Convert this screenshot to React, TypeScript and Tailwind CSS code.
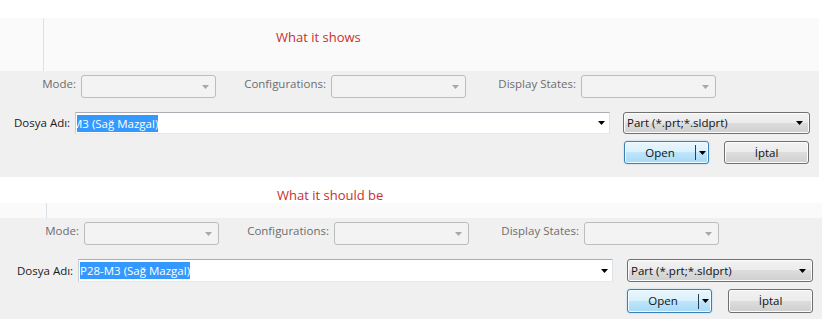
import React from "react";

function Tri({ color, w = 7, h = 4 }: { color: string; w?: number; h?: number }) {
  return (
    <svg width={w} height={h} viewBox={`0 0 ${w} ${h}`} className="block">
      <polygon points={`0,0 ${w},0 ${w / 2},${h}`} fill={color} />
    </svg>
  );
}

function DisabledCombo({ w }: { w: string }) {
  return (
    <div className={`${w} h-[23px] rounded-[3px] border border-[#bcbcbc] bg-[#f3f3f3] flex items-center justify-end pr-[6px]`}>
      <Tri color="#a8a8a8" w={7} h={4} />
    </div>
  );
}

function Dialog({ v }: { v: 1 | 2 }) {
  const one = v === 1;
  return (
    <div className={one ? "h-[106px] bg-[#f0f0f0] pt-[4px]" : "h-[101px] bg-[#f0f0f0] pt-[4px]"}>
      {/* row 1 */}
      <div className={one ? "flex items-start pl-[16px] h-[23px]" : "flex items-start pl-[19px] h-[23px]"}>
        <div className="w-[60px] text-right pt-[1px] leading-[16px] text-[#6d6d6d]">Mode:</div>
        <div className="ml-[5px]">
          <DisabledCombo w="w-[135px]" />
        </div>
        <div className="w-[95px] ml-[15px] text-right pt-[1px] leading-[16px] text-[#6d6d6d]">Configurations:</div>
        <div className="ml-[5px]">
          <DisabledCombo w="w-[135px]" />
        </div>
        <div className="w-[95px] ml-[15px] text-right pt-[1px] leading-[16px] text-[#6d6d6d]">Display States:</div>
        <div className="ml-[5px]">
          <DisabledCombo w="w-[135px]" />
        </div>
      </div>
      {/* row 2 */}
      <div className={one ? "flex items-center pl-[14px] mt-[14px] h-[22px]" : "flex items-center pl-[17px] mt-[14px] h-[23px]"}>
        <div className="w-[61px] leading-[16px] text-[#1a1a1a]">Dosya Adı:</div>
        <div className="w-[535px] h-full border border-[#abadb3] border-l-[#c7d0da] border-r-[#dbe3ea] border-b-[#e3e9ef] bg-white flex items-center pl-[1px] pr-[4px]">
          <div className="flex-1 overflow-hidden flex items-center">
            {one ? (
              <span className="ml-[-5px] bg-[#3399ff] text-white leading-[17px] whitespace-nowrap">M3 (Sağ Mazgal)</span>
            ) : (
              <span className="bg-[#3399ff] text-white leading-[17px] whitespace-nowrap">P28-M3 (Sağ Mazgal)</span>
            )}
          </div>
          <Tri color="#000000" w={7} h={4} />
        </div>
        <div className={one ? "ml-[13px] w-[187px] h-full" : "ml-[14px] w-[186px] h-full"}>
          <div className="w-full h-full rounded-[3px] border border-[#707070] bg-[linear-gradient(#f2f2f2_0%,#ebebeb_50%,#dddddd_50%,#cfcfcf_100%)] shadow-[inset_0_0_0_1px_#fcfcfc] flex items-center pl-[3px] pr-[6px] text-[#111]">
            <span className="flex-1 leading-[16px] whitespace-nowrap">Part (*.prt;*.sldprt)</span>
            <Tri color="#000000" w={7} h={4} />
          </div>
        </div>
      </div>
      {/* row 3 */}
      <div className={one ? "flex justify-end pr-[10px] mt-[7px] h-[23px] gap-[15px]" : "flex justify-end pr-[9px] mt-[7px] h-[24px] gap-[16px]"}>
        <div className="w-[85px] h-full rounded-[3px] border border-[#3c7fb1] bg-[linear-gradient(#eaf6fd_0%,#d9f0fc_50%,#bee6fd_50%,#a7d9f5_100%)] shadow-[inset_0_0_0_1px_#f4fbff,0_0_2px_#9fd4f5] flex items-center text-[#111]">
          <div className="flex-1 text-center leading-[16px]">Open</div>
          <div className="w-px h-[15px] bg-[#2b3f4f]" />
          <div className="w-[12px] flex justify-center">
            <Tri color="#000000" w={7} h={4} />
          </div>
        </div>
        <div className="w-[85px] h-full rounded-[3px] border border-[#707070] bg-[linear-gradient(#f2f2f2_0%,#ebebeb_50%,#dddddd_50%,#cfcfcf_100%)] shadow-[inset_0_0_0_1px_#fcfcfc] flex items-center justify-center text-[#111] leading-[16px]">
          İptal
        </div>
      </div>
    </div>
  );
}

export default function App() {
  return (
    <div className="w-[822px] h-[319px] bg-white overflow-hidden font-['Open_Sans',sans-serif] text-[11.5px]">
      {/* panel 1 */}
      <div className="w-[819px] pt-[18px]">
        <div className="h-[53px] bg-[#fafafa] flex">
          <div className="ml-[43px] w-px bg-[#dae2e9]" />
          <div className="ml-[232px] pt-[10px] text-[13px] leading-[18px] text-[#c8302c]">What it shows</div>
        </div>
        <Dialog v={1} />
      </div>
      {/* panel 2 */}
      <div className="w-[822px]">
        <div className="h-[26px] pt-[9px] pl-[277px] text-[13px] leading-[18px] text-[#c8302c]">What it should be</div>
        <div className="h-[15px] bg-[#fafafa] flex">
          <div className="ml-[46px] w-px bg-[#dae2e9]" />
        </div>
        <Dialog v={2} />
      </div>
    </div>
  );
}
